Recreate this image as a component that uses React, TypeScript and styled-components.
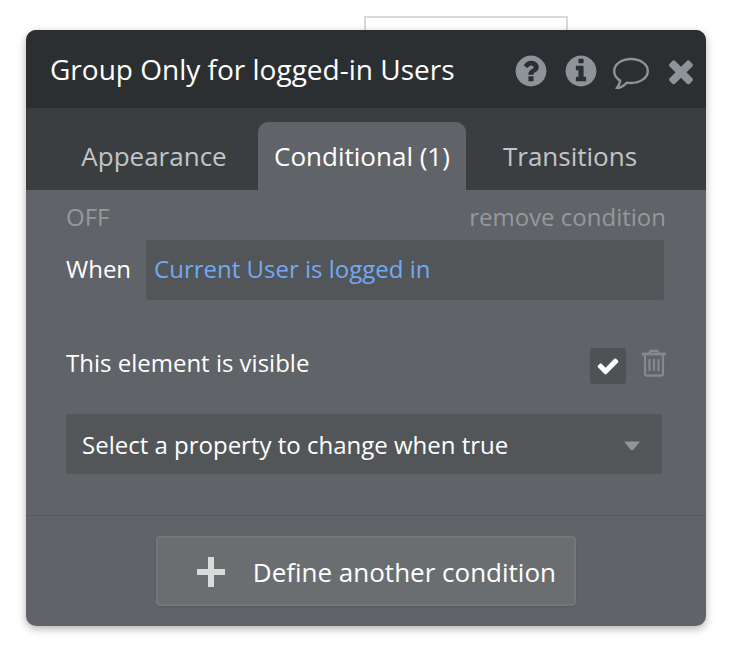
import React from "react";
import styled, { createGlobalStyle, css } from "styled-components";

const GlobalStyle = createGlobalStyle`
  *, *::before, *::after { box-sizing: border-box; }
  body { margin: 0; background: #ffffff; }
  body, button, input, select {
    font-family: "Open Sans", "Noto Sans", sans-serif;
    font-weight: 400;
  }
`;

const Canvas = styled.main`
  padding: 16px 32px 26px 26px;
`;

const ElementOutline = styled.div`
  width: 30%;
  height: 14px;
  margin-left: calc(50% - 2px);
  border: 2px solid #d9d9d9;
  border-bottom: 0;
`;

const Panel = styled.section`
  background: #606368;
  border-radius: 10px;
  overflow: hidden;
  box-shadow: 0 3px 8px rgba(0, 0, 0, 0.3);
`;

const Header = styled.header`
  display: flex;
  align-items: center;
  justify-content: space-between;
  min-height: 78px;
  padding-left: 24px;
  background: #2b2f32;
`;

const Title = styled.h1`
  margin: 0;
  color: #ffffff;
  font-size: 28px;
  line-height: 38px;
  font-weight: 400;
`;

const HeaderActions = styled.div`
  display: flex;
  flex: none;
  padding-top: 4px;
`;

const bareButton = css`
  margin: 0;
  padding: 0;
  border: 0;
  background: none;
  cursor: pointer;
`;

const IconButton = styled.button`
  ${bareButton}
  display: grid;
  place-items: center;
  width: 50px;
  height: 50px;
  color: #8e9399;
`;

const Glyph = styled.svg<{ $size: number }>`
  display: block;
  width: ${(p) => p.$size}px;
  height: ${(p) => p.$size}px;
  fill: currentColor;
`;

const TabStrip = styled.nav`
  display: flex;
  padding: 14px 32px 0 24px;
  background: #3b3e41;
`;

const Tab = styled.button<{ $active?: boolean }>`
  ${bareButton}
  flex: 1;
  height: 68px;
  border-radius: 10px 10px 0 0;
  background: ${(p) => (p.$active ? "#606368" : "transparent")};
  color: ${(p) => (p.$active ? "#ffffff" : "#c2c5c6")};
  font-size: 26px;
  line-height: 36px;
  white-space: nowrap;
`;

const Condition = styled.div`
  padding: 10px 40px 41px;
  font-size: 24px;
  line-height: 34px;
  color: #ffffff;
`;

const Row = styled.div`
  display: flex;
  align-items: center;
  justify-content: space-between;
`;

const QuietButton = styled.button`
  ${bareButton}
  color: #95999c;
  font-size: 24px;
  line-height: 34px;
`;

const WhenRow = styled.div`
  display: flex;
  align-items: center;
  gap: 15px;
  margin: 6px 2px 48px 0;
`;

const WhenLabel = styled.label`
  padding-bottom: 2px;
`;

const ExpressionInput = styled.input`
  flex: 1;
  min-width: 0;
  height: 60px;
  padding: 0 8px 4px;
  border: 0;
  border-radius: 3px;
  background: #525659;
  color: #73a9f2;
  font-size: 24px;
`;

const PropertyRow = styled(Row)`
  margin: 0 -2px 30px 0;
`;

const PropertyLabel = styled.label`
  flex: 1;
  padding-bottom: 6px;
  line-height: 30px;
`;

const CheckWrap = styled.span`
  display: grid;
  width: 36px;
  height: 36px;
  margin-right: 14px;
  > * { grid-area: 1 / 1; place-self: center; }
  svg { pointer-events: none; }
`;

const CheckInput = styled.input`
  appearance: none;
  width: 36px;
  height: 36px;
  margin: 0;
  border-radius: 3px;
  background: #4e5255;
  & + svg { visibility: hidden; }
  &:checked + svg { visibility: visible; }
`;

const TrashButton = styled.button`
  ${bareButton}
  height: 36px;
  padding-bottom: 6px;
  color: #85898d;
`;

const SelectWrap = styled.div`
  display: grid;
  align-items: center;
  margin-right: 4px;
  > * { grid-area: 1 / 1; }
  svg {
    justify-self: end;
    margin-right: 22px;
    margin-top: 4px;
    color: #8f969b;
    pointer-events: none;
  }
`;

const PropertySelect = styled.select`
  appearance: none;
  width: 100%;
  height: 60px;
  padding: 0 48px 0 16px;
  border: 0;
  border-radius: 3px;
  background: #525659;
  color: #ffffff;
  font-size: 24px;
`;

const Footer = styled.footer`
  display: flex;
  justify-content: center;
  padding: 20px;
  border-top: 1px solid #55595c;
`;

const DefineButton = styled.button`
  ${bareButton}
  display: flex;
  align-items: center;
  justify-content: space-between;
  width: 420px;
  max-width: 100%;
  height: 70px;
  padding: 2px 18px 0 38px;
  border: 2px solid #73777a;
  border-radius: 4px;
  background: #6a6e71;
  box-shadow: 0 1px 2px rgba(0, 0, 0, 0.12);
  color: #ffffff;
  font-size: 26px;
  line-height: 36px;
  svg { color: #d9dbda; }
`;

const DISC =
  "m640 0q0 209-103 385.5t-279.5 279.5-385.5 103-385.5-103-279.5-279.5-103-385.5 103-385.5 279.5-279.5 385.5-103 385.5 103 279.5 279.5 103 385.5z";

const QuestionIcon = () => (
  <Glyph $size={36} viewBox="0 0 1792 1792" aria-hidden="true">
    <path
      fillRule="evenodd"
      d={
        "M1024 1376v-192q0-14-9-23t-23-9h-192q-14 0-23 9t-9 23v192q0 14 9 23t23 9h192q14 0 23-9t9-23zm256-672q0-88-55.5-163t-138.5-116-170-41q-243 0-371 213-15 24 8 42l132 100q7 6 19 6 16 0 25-12 53-68 86-92 34-24 86-24 48 0 85.5 26t37.5 59q0 38-20 61t-68 45q-63 28-115.5 86.5t-52.5 125.5v36q0 14 9 23t23 9h192q14 0 23-9t9-23q0-19 21.5-49.5t54.5-49.5q32-18 49-28.5t46-35 44.5-48 28-60.5 12.5-81zM1024 896" +
        DISC
      }
    />
  </Glyph>
);

const InfoIcon = () => (
  <Glyph $size={36} viewBox="0 0 1792 1792" aria-hidden="true">
    <path
      fillRule="evenodd"
      d={
        "M1152 1376v-160q0-14-9-23t-23-9h-96v-512q0-14-9-23t-23-9h-320q-14 0-23 9t-9 23v160q0 14 9 23t23 9h96v320h-96q-14 0-23 9t-9 23v160q0 14 9 23t23 9h448q14 0 23-9t9-23zm-128-896v-160q0-14-9-23t-23-9h-192q-14 0-23 9t-9 23v160q0 14 9 23t23 9h192q14 0 23-9t9-23zM1024 896" +
        DISC
      }
    />
  </Glyph>
);

const CommentIcon = () => (
  <Glyph $size={36} viewBox="0 0 36 36" aria-hidden="true">
    <path
      d="M18 6C27 6 34.8 11 34.8 18C34.8 25 27 30 18 30C16.600 30 15.300 29.900 14 29.600C11 32.800 7.500 34.800 3.500 35.600C5.500 33.300 6.800 30.500 7.200 27.600C3.500 25.500 1.200 22 1.200 18C1.200 11 9 6 18 6Z"
      fill="none"
      stroke="currentColor"
      strokeWidth="2.400"
      strokeLinejoin="round"
    />
  </Glyph>
);

const CloseIcon = () => (
  <Glyph $size={36} viewBox="0 0 1792 1792" aria-hidden="true">
    <path d="M1490 1322q0 40-28 68l-136 136q-28 28-68 28t-68-28l-294-294-294 294q-28 28-68 28t-68-28l-136-136q-28-28-28-68t28-68l294-294-294-294q-28-28-28-68t28-68l136-136q28-28 68-28t68 28l294 294 294-294q28-28 68-28t68 28l136 136q28 28 28 68t-28 68l-294 294 294 294q28 28 28 68z" />
  </Glyph>
);

const CheckIcon = () => (
  <Glyph $size={24} viewBox="0 0 1792 1792" color="#ffffff" aria-hidden="true">
    <path d="M1671 566q0 40-28 68l-724 724-136 136q-28 28-68 28t-68-28l-136-136-362-362q-28-28-28-68t28-68l136-136q28-28 68-28t68 28l294 295 656-657q28-28 68-28t68 28l136 136q28 28 28 68z" />
  </Glyph>
);

const TrashIcon = () => (
  <Glyph $size={28} viewBox="0 0 28 28" aria-hidden="true">
    <g fill="none" stroke="currentColor" strokeWidth="2.200">
      <path d="M2 5H26" strokeWidth="2.800" />
      <path d="M9 4.500L10.500 1.800H17.500L19 4.500" />
      <path d="M5 6V24.500Q5 26.700 7.200 26.700H20.800Q23 26.700 23 24.500V6" />
      <path d="M9.500 10V22M14 10V22M18.500 10V22" />
    </g>
  </Glyph>
);

const CaretIcon = () => (
  <Glyph $size={16} viewBox="0 0 16 16" aria-hidden="true">
    <path d="M0 3.500H16L9.500 11.500Q8 13 6.500 11.500Z" />
  </Glyph>
);

const PlusIcon = () => (
  <Glyph $size={30} viewBox="0 0 30 30" aria-hidden="true">
    <path d="M12 0H18V12H29V18H18V30H12V18H1V12H12Z" />
  </Glyph>
);

export default function App() {
  return (
    <>
      <GlobalStyle />
      <Canvas>
        <ElementOutline />
        <Panel aria-label="Property editor">
          <Header>
            <Title>Group Only for logged-in Users</Title>
            <HeaderActions>
              <IconButton aria-label="Help"><QuestionIcon /></IconButton>
              <IconButton aria-label="Info"><InfoIcon /></IconButton>
              <IconButton aria-label="Comment"><CommentIcon /></IconButton>
              <IconButton aria-label="Close"><CloseIcon /></IconButton>
            </HeaderActions>
          </Header>
          <TabStrip>
            <Tab>Appearance</Tab>
            <Tab $active aria-current="page">Conditional (1)</Tab>
            <Tab>Transitions</Tab>
          </TabStrip>
          <Condition>
            <Row>
              <QuietButton>OFF</QuietButton>
              <QuietButton>remove condition</QuietButton>
            </Row>
            <WhenRow>
              <WhenLabel htmlFor="when">When</WhenLabel>
              <ExpressionInput id="when" type="text" defaultValue="Current User is logged in" />
            </WhenRow>
            <PropertyRow>
              <PropertyLabel htmlFor="visible">This element is visible</PropertyLabel>
              <CheckWrap>
                <CheckInput id="visible" type="checkbox" defaultChecked />
                <CheckIcon />
              </CheckWrap>
              <TrashButton aria-label="Delete property"><TrashIcon /></TrashButton>
            </PropertyRow>
            <SelectWrap>
              <PropertySelect aria-label="Property to change">
                <option>Select a property to change when true</option>
              </PropertySelect>
              <CaretIcon />
            </SelectWrap>
          </Condition>
          <Footer>
            <DefineButton>
              <PlusIcon />
              Define another condition
            </DefineButton>
          </Footer>
        </Panel>
      </Canvas>
    </>
  );
}
